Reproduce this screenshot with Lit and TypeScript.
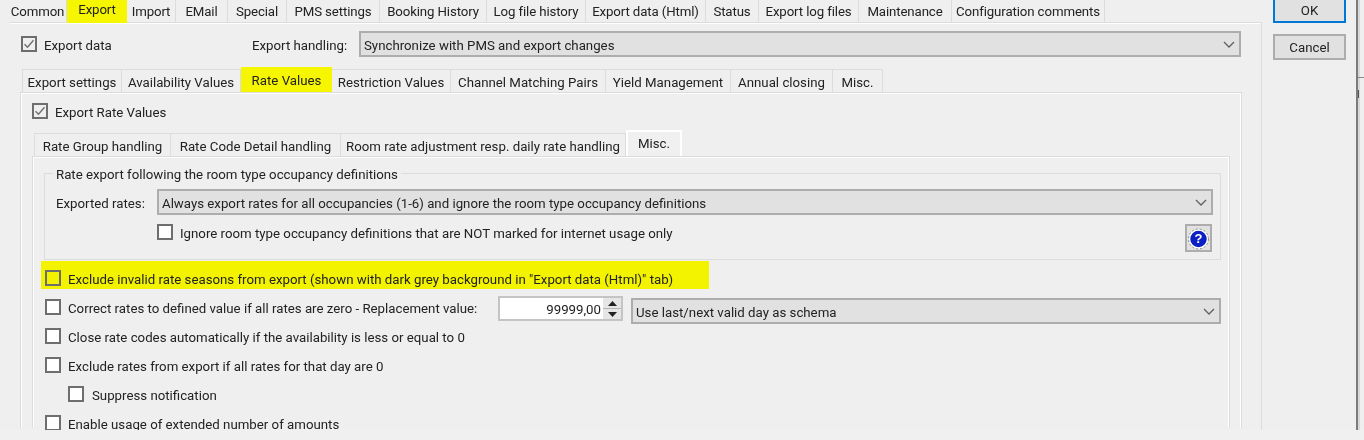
import { LitElement, html, css, svg } from "lit";
import { customElement } from "lit/decorators.js";

type Tab = [string, number, string?];

const TOP: Tab[] = [
  ["Common", 58], ["Export", 60, "hl"], ["Import", 49], ["EMail", 52], ["Special", 59],
  ["PMS settings", 93], ["Booking History", 107], ["Log file history", 99],
  ["Export data (Html)", 120], ["Status", 53], ["Export log files", 100],
  ["Maintenance", 93], ["Configuration comments", 153],
];
const SUB: Tab[] = [
  ["Export settings", 100], ["Availability Values", 119], ["Rate Values", 91, "hl"],
  ["Restriction Values", 119], ["Channel Matching Pairs", 155], ["Yield Management", 125],
  ["Annual closing", 102], ["Misc.", 50],
];
const THIRD: Tab[] = [
  ["Rate Group handling", 137], ["Rate Code Detail handling", 170],
  ["Room rate adjustment resp. daily rate handling", 285], ["Misc.", 56, "sel"],
];

const chevron = svg`<svg class="chev" width="12" height="7" viewBox="0 0 12 7"><path d="M1 1l5 5 5-5" fill="none" stroke="#606060" stroke-width="1.3"/></svg>`;

@customElement("app-root")
export class AppRoot extends LitElement {
  static styles = css`
    :host { display: block; width: 1364px; height: 440px; background: #f0f0f0; overflow: hidden;
      font-family: "Roboto", "Noto Sans", sans-serif; font-size: 13.25px; color: #222; }
    .root { display: flex; height: 430px; overflow: hidden; background: #efefef; filter: blur(0.35px); }
    .main { width: 1262px; display: flex; flex-direction: column; padding-left: 9px; box-sizing: border-box; }
    .side { width: 94px; padding-left: 11px; box-sizing: border-box; display: flex; flex-direction: column; }
    .edge { width: 8px; border-left: 2px solid #7c7c7c; box-sizing: border-box; box-shadow: inset 2px 0 0 #d8d8d8; }
    .edge .hline { height: 1px; background: #8a8a8a; margin-top: 77px; }
    .edge .frag { width: 1px; height: 8px; background: #555; margin-top: 12px; }
    .btn { width: 73px; height: 26px; box-sizing: border-box; background: #e1e1e1; border: 2px solid #adadad;
      display: flex; align-items: center; justify-content: center; }
    .btn.ok { border-color: #0078d7; margin-top: -3px; }
    .btn.cancel { margin-top: 11px; }

    .tabs { display: flex; align-items: flex-start; flex: none; }
    .tab { box-sizing: border-box; display: flex; align-items: center; justify-content: center; white-space: nowrap;
      background: #efefef; border-right: 1px solid #dcdcdc; height: 100%; }
    .top { height: 22px; letter-spacing: -0.12px; }
    .top .tab { height: 22px; }
    .top .tab.hl { height: 23px; padding-bottom: 5px; background: #f6f600; position: relative; border: 0; }
    .sub { height: 25px; padding: 0 0 0 2px; align-items: flex-end; }
    .sub .tab { height: 23px; padding-top: 2px; border-top: 1px solid #dcdcdc; }
    .sub .tab:first-child, .third .tab:first-child { border-left: 1px solid #dcdcdc; }
    .sub .tab.hl { height: 25px; padding: 1px 0 0; background: #f6f600; border: 0; position: relative; }
    .third { height: 26px; margin-top: 11px; padding-left: 2px; align-items: flex-end; }
    .third .tab { height: 23px; padding-top: 2px; border-top: 1px solid #dcdcdc; }
    .third .tab.sel { height: 26px; padding: 0; border: 0; box-shadow: inset 0 2px 0 #fff, inset 2px 0 0 #fff, inset -2px 0 0 #fff; background: #f0f0f0; position: relative; }

    .panel { border: 1px solid #dcdcdc; border-bottom-color: transparent; box-shadow: inset 1px 1px 0 #fff, inset -1px 0 0 #fff; box-sizing: border-box;
      flex: 1; min-height: 0; display: flex; flex-direction: column; }
    .p1 { width: 1253px; border-left-color: transparent; padding: 8px 0 0 10px; box-shadow: inset 0 1px 0 #fff; }
    .p2 { width: 1222px; padding: 10px 0 0 11px; }
    .p3 { width: 1198px; padding: 16px 0 0 11px; }

    .row { display: flex; align-items: center; flex: none; }
    .cb { width: 16px; height: 16px; box-sizing: border-box; border: 2px solid #6e6e6e; background: #fff; flex: none; display: flex; }
    .cb.on { background: #efefef; }
    .cb.y { background: #f3f300; }
    .lbl { margin-left: 7px; white-space: nowrap; line-height: 20px; height: 16px; }
    .select { box-sizing: border-box; height: 26px; background: #e1e1e1; border: 2px solid #adadad; display: flex;
      align-items: center; justify-content: space-between; padding: 0 4px 0 3px; white-space: nowrap; flex: none; }
    .select span { padding-top: 3px; }
    .chev { flex: none; }

    .head { padding-left: 1px; height: 26px; margin-bottom: 10px; }
    .head .w1 { width: 208px; }
    .head .w2 { width: 107px; padding-top: 2px; }
    .head .select { width: 882px; }

    .group { position: relative; width: 1177px; height: 87px; box-sizing: border-box; border: 1px solid #dcdcdc;
      padding: 15px 0 0 11px; flex: none; }
    .legend { position: absolute; left: 8px; top: -8px; padding: 0 3px; background: #efefef; line-height: 18px; white-space: nowrap; }
    .group .w { width: 101px; padding-top: 2px; }
    .group .select { width: 1056px; }
    .ig { margin-top: 9px; padding-left: 101px; align-items: flex-start; }
    .ig .lbl { width: 1005px; box-sizing: border-box; }
    .help { width: 27px; height: 28px; box-sizing: border-box; background: #e1e1e1; border: 2px solid #adadad;
      display: flex; align-items: center; justify-content: center; flex: none; position: relative; }
    .help svg { position: absolute; left: 0; top: 2px; }
    .q { position: relative; top: 1px; color: #fff; font: bold 13px "Liberation Sans", sans-serif; line-height: 18px; }

    .yellow { margin: 1px 0 0 -3px; width: 668px; height: 28px; background: #f3f300; padding: 9px 0 0 4px; box-sizing: border-box; align-items: flex-start; }
    .list { margin-top: 7px; padding-left: 1px; display: flex; flex-direction: column; gap: 13px; }
    .replace { height: 28px; align-items: flex-start; margin-bottom: -9px; }
    .replace .cb { margin-top: 3px; }
    .replace .lbl { margin-top: 3px; width: 430px; margin-left: 7px; }
    .num { width: 125px; height: 25px; box-sizing: border-box; border: 2px solid #c4c4c4; background: #fff; display: flex;
      align-items: center; justify-content: flex-end; flex: none; }
    .num .val { padding: 1px 2px 0 0; }
    .spin { width: 18px; height: 21px; background: #e6e6e6; display: flex; flex-direction: column; flex: none; }
    .spin span { flex: 1; display: flex; align-items: center; justify-content: center; padding: 0; }
    .spin span + span { border-top: 1px solid #b5b5b5; }
    .replace .select { margin: 2px 0 0 8px; width: 590px; }
    .indent { padding-left: 23px; }
    .indent .lbl { margin-left: 8px; }
  `;

  private tabs(list: Tab[], cls: string) {
    return html`<div class="tabs ${cls}">
      ${list.map(([t, w, c]) => html`<div class="tab ${c ?? ""}" style="width:${w}px">${t}</div>`)}
    </div>`;
  }

  private cb(kind = "") {
    return html`<span class="cb ${kind}">${kind === "on"
      ? svg`<svg width="12" height="12" viewBox="0 0 12 12"><path d="M1.5 6.2l3 3 6-7" fill="none" stroke="#707070" stroke-width="1.4"/></svg>`
      : ""}</span>`;
  }

  render() {
    return html`<div class="root">
      <div class="main">
        ${this.tabs(TOP, "top")}
        <div class="panel p1">
          <div class="row head">
            ${this.cb("on")}<span class="lbl w1">Export data</span>
            <span class="w2">Export handling:</span>
            <div class="select"><span>Synchronize with PMS and export changes</span>${chevron}</div>
          </div>
          ${this.tabs(SUB, "sub")}
          <div class="panel p2">
            <div class="row">${this.cb("on")}<span class="lbl">Export Rate Values</span></div>
            ${this.tabs(THIRD, "third")}
            <div class="panel p3">
              <div class="group">
                <div class="legend">Rate export following the room type occupancy definitions</div>
                <div class="row">
                  <span class="w">Exported rates:</span>
                  <div class="select"><span>Always export rates for all occupancies (1-6) and ignore the room type occupancy definitions</span>${chevron}</div>
                </div>
                <div class="row ig">
                  ${this.cb()}<span class="lbl">Ignore room type occupancy definitions that are NOT marked for internet usage only</span>
                  <div class="help">
                    <svg width="23" height="22" viewBox="0 0 23 22"><circle cx="11.5" cy="11" r="9" fill="#0a1fc4" stroke="#fff" stroke-width="1.5"/><circle cx="11.5" cy="11" r="10" fill="none" stroke="#8a8a8a" stroke-width="1" stroke-dasharray="2 2"/></svg>
                    <span class="q">?</span>
                  </div>
                </div>
              </div>
              <div class="row yellow">${this.cb("y")}<span class="lbl">Exclude invalid rate seasons from export (shown with dark grey background in "Export data (Html)" tab)</span></div>
              <div class="list">
                <div class="row replace">
                  ${this.cb()}<span class="lbl">Correct rates to defined value if all rates are zero - Replacement value:</span>
                  <div class="num"><span class="val">99999,00</span>
                    <div class="spin">
                      <span><svg width="9" height="5" viewBox="0 0 9 5"><path d="M4.5 0L9 5H0z" fill="#222"/></svg></span>
                      <span><svg width="9" height="5" viewBox="0 0 9 5"><path d="M4.5 5L9 0H0z" fill="#222"/></svg></span>
                    </div>
                  </div>
                  <div class="select"><span>Use last/next valid day as schema</span>${chevron}</div>
                </div>
                <div class="row">${this.cb()}<span class="lbl">Close rate codes automatically if the availability is less or equal to 0</span></div>
                <div class="row">${this.cb()}<span class="lbl">Exclude rates from export if all rates for that day are 0</span></div>
                <div class="row indent">${this.cb()}<span class="lbl">Suppress notification</span></div>
                <div class="row">${this.cb()}<span class="lbl">Enable usage of extended number of amounts</span></div>
              </div>
            </div>
          </div>
        </div>
      </div>
      <div class="side">
        <div class="btn ok">OK</div>
        <div class="btn cancel">Cancel</div>
      </div>
      <div class="edge"><div class="hline"></div><div class="frag"></div></div>
    </div>`;
  }
}
